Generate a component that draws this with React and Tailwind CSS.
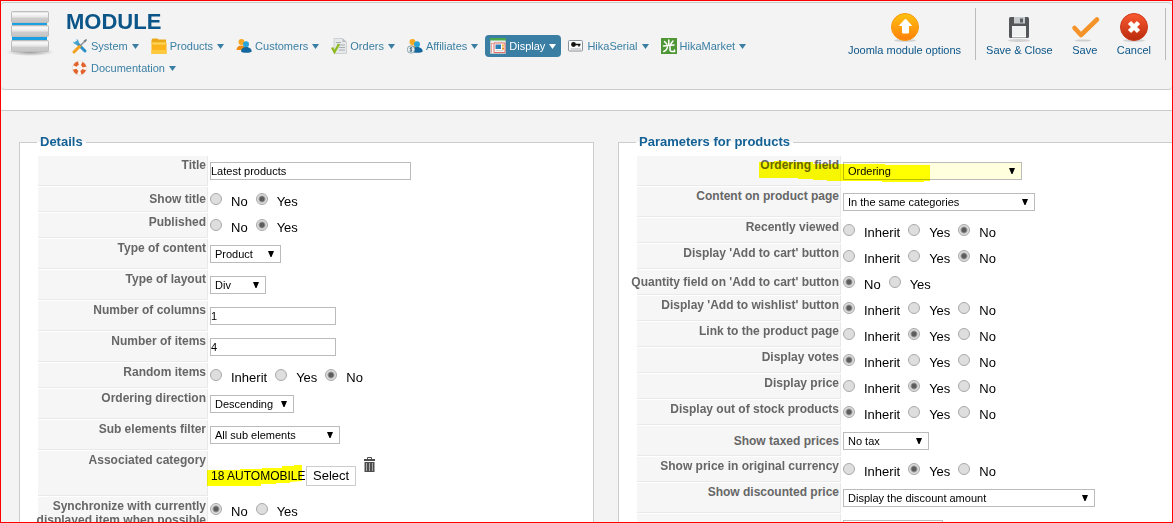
import React from 'react';
import clsx from 'clsx';

const PeopleShapes = () => (
  <>
    <circle cx="5.5" cy="4" r="3" fill="#f7a823" />
    <path d="M0.5 12c0-3 2-4.500 5-4.500s4 1.500 4 4.500z" fill="#f08c12" />
    <circle cx="10" cy="6.300" r="3" fill="#2aa3d8" />
    <path d="M5 13.500c0-3 2-4.500 5-4.500s5.700 1.500 5.700 4.500c-1 1.800-9.700 1.800-10.700 0z" fill="#14679c" />
  </>
);

const NavIcon = ({ name }) => (
  <svg viewBox="0 0 16 16" className="w-4 h-4 shrink-0" aria-hidden="true">
    {name === 'system' && (
      <>
        <path d="M4.500 4.500L13 13" stroke="#2b8fc7" strokeWidth="3" strokeLinecap="round" />
        <path d="M1 3.500a3.600 3.600 0 0 0 5.500 2.500a3.600 3.600 0 0 0-2-5l.5 2.500-2 1z" fill="#4ba3d0" />
        <path d="M2 14L8 8" stroke="#f2a01e" strokeWidth="3" strokeLinecap="round" />
        <path d="M8 8l5-5" stroke="#8a9299" strokeWidth="1.500" />
        <path d="M11.500 3l2.500-2 1 1-2 2.500z" fill="#6f777d" />
      </>
    )}
    {name === 'products' && (
      <>
        <path d="M0.500 2l1-1.500h5l1 1h7.500v4H.500z" fill="#eba91a" />
        <path d="M0.500 4.500h15V16H.500z" fill="#fbb41c" />
        <path d="M0.500 4.500h15l-1.500 2H2z" fill="#ffd75a" />
        <path d="M0.500 12h15v4H.500z" fill="#fdc93e" />
      </>
    )}
    {name === 'customers' && <PeopleShapes />}
    {name === 'orders' && (
      <>
        <path d="M3 .500h8.500l4 3.500v11.500H3z" fill="#e6e8e9" stroke="#c6c9cb" strokeWidth=".800" />
        <path d="M11.500 .500v3.500h4z" fill="#b6babd" />
        <path d="M5 4.500h5M6 7h8M8 9.500h6M8 12h6" stroke="#a9aeb1" />
        <path d="M1 9.500l2.500 4.500L8 6" stroke="#8dbb1f" strokeWidth="2.300" fill="none" />
      </>
    )}
    {name === 'affiliates' && (
      <>
        <PeopleShapes />
        <circle cx="4" cy="11.500" r="3.700" fill="#eef3f6" stroke="#73919f" strokeWidth=".800" />
        <path d="M5.300 10c-2-1-3 .8-1.300 1.400s.8 2.500-1.400 1.500M4 9v5" stroke="#33566b" strokeWidth=".800" fill="none" />
      </>
    )}
    {name === 'display' && (
      <>
        <path d="M0.500 .500h15v15h-15z" fill="#f5f5f5" stroke="#b9c6cc" />
        <path d="M0 0h16v2.500H0z" fill="#4aa84d" />
        <path d="M1.500 4h13" stroke="#d8dcdd" />
        <path d="M4 5h11v9.500H4z" fill="#fff" stroke="#e26a63" />
        <path d="M1 5.500h2.500M1.500 5v10" stroke="#e9a29c" />
        <path d="M5.500 6.500h5.500v4.500H5.500z" fill="#2b7fb5" />
        <path d="M12 6.500h2v2h-2z" fill="#f3b23c" />
        <path d="M12 9.500h2v2h-2z" fill="#f08c12" />
        <path d="M5.500 12.700h8" stroke="#c8cdd0" />
      </>
    )}
    {name === 'serial' && (
      <>
        <rect x=".500" y="2.500" width="14" height="10.500" rx="1" fill="#fbfbfb" stroke="#8a9299" />
        <circle cx="5.500" cy="6.500" r="2.400" fill="#111" />
        <path d="M7 6.500h5.500M11 6.500v2" stroke="#111" strokeWidth="1.600" />
        <path d="M2.500 11h10.500" stroke="#a9aeb1" />
      </>
    )}
    {name === 'market' && (
      <>
        <path d="M0 0h16v16H0z" fill="#4f9637" />
        <path
          d="M7.800 2v5.500M3.500 3.500l2.500 2.700M12 3l-2.300 3M2.500 8l10.500-1M6.500 8q0 4-3.800 5.500M9 8v3.500q0 2 2 2h2.500v-1.500"
          stroke="#fff"
          strokeWidth="1.500"
          strokeLinecap="round"
          fill="none"
        />
      </>
    )}
    {name === 'documentation' && (
      <>
        <circle cx="7.500" cy="8" r="5" stroke="#fdf6f2" strokeWidth="4.600" fill="none" />
        <circle cx="7.500" cy="8" r="5" stroke="#e2622a" strokeWidth="4" fill="none" strokeDasharray="4.400 3.454" strokeDashoffset="-1.727" />
        <circle cx="7.500" cy="8" r="7.200" stroke="#dcd6d2" strokeWidth=".600" fill="none" />
      </>
    )}
  </svg>
);

const navItems = [
  { label: 'System', icon: 'system' },
  { label: 'Products', icon: 'products' },
  { label: 'Customers', icon: 'customers' },
  { label: 'Orders', icon: 'orders' },
  { label: 'Affiliates', icon: 'affiliates' },
  { label: 'Display', icon: 'display', active: true },
  { label: 'HikaSerial', icon: 'serial' },
  { label: 'HikaMarket', icon: 'market' },
  { label: 'Documentation', icon: 'documentation' },
];

const Logo = () => (
  <svg viewBox="0 0 50 50" className="w-[50px] h-[50px] shrink-0" aria-hidden="true">
    <defs>
      <linearGradient id="slab" x1="0" y1="0" x2="0" y2="1">
        <stop offset="0" stopColor="#d6d6d6" />
        <stop offset=".2" stopColor="#fafafa" />
        <stop offset=".5" stopColor="#e6e6e6" />
        <stop offset=".6" stopColor="#cdcdcd" />
        <stop offset="1" stopColor="#c4c4c4" />
      </linearGradient>
      <radialGradient id="slabShadow">
        <stop offset="0" stopColor="#999" />
        <stop offset="1" stopColor="#999" stopOpacity="0" />
      </radialGradient>
    </defs>
    <ellipse cx="25" cy="44" rx="24" ry="4" fill="url(#slabShadow)" />
    <rect x="7" y="12" width="35" height="28" fill="#1a9fe0" />
    <rect x="6.500" y="3.500" width="37" height="11" rx="1" fill="url(#slab)" stroke="#bdbdbd" />
    <rect x="6.500" y="17.500" width="37" height="11" rx="1" fill="url(#slab)" stroke="#bdbdbd" />
    <rect x="6.500" y="32.500" width="37" height="11" rx="1" fill="url(#slab)" stroke="#bdbdbd" />
  </svg>
);

const ToolbarIcon = ({ name }) => (
  <svg viewBox="0 0 32 32" className="w-8 h-8" aria-hidden="true">
    <defs>
      <linearGradient id="orange" x1="0" y1="0" x2="0" y2="1">
        <stop offset="0" stopColor="#ffc20e" />
        <stop offset="1" stopColor="#ff7f0a" />
      </linearGradient>
      <linearGradient id="red" x1="0" y1="0" x2="0" y2="1">
        <stop offset="0" stopColor="#fb5a32" />
        <stop offset="1" stopColor="#b92a0c" />
      </linearGradient>
    </defs>
    {name === 'save' ? (
      <ellipse cx="14" cy="29.500" rx="8" ry="1" fill="#cfcfcf" />
    ) : (
      <ellipse cx="16" cy="29.500" rx="11" ry="1.500" fill="#d2d2d2" />
    )}
    {name === 'options' && (
      <>
        <circle cx="16" cy="16" r="13.500" fill="url(#orange)" stroke="#f79a10" />
        <path d="M16.500 8l6 6.500h-3V22h-6v-7.500h-3z" fill="#fff" stroke="#fff" strokeLinejoin="round" />
      </>
    )}
    {name === 'save-close' && (
      <>
        <path d="M6 7.500q0-1.500 1.500-1.500h17q1.500 0 1.500 1.500v18q0 1.500-1.500 1.500h-17q-1.500 0-1.500-1.500z" fill="#55585b" />
        <path d="M11 6h11v6.500H11z" fill="#c8cbcd" />
        <path d="M17 7.500h3v4h-3z" fill="#5b5e61" />
        <path d="M9 15h14v11H9z" fill="#f0f1f1" />
        <path d="M9 25h14v1.500H9z" fill="#fff" />
      </>
    )}
    {name === 'save' && (
      <path d="M5.500 17l6.500 7L28 8.500" fill="none" stroke="#f4932a" strokeWidth="4.600" strokeLinecap="round" strokeLinejoin="round" />
    )}
    {name === 'cancel' && (
      <>
        <circle cx="16" cy="16" r="13.500" fill="url(#red)" stroke="#c93a1a" />
        <path d="M11.500 11.500l9 9M20.500 11.500l-9 9" stroke="#fff" strokeWidth="4.500" />
      </>
    )}
  </svg>
);

const ToolbarButton = ({ icon, label }) => (
  <button type="button" className="flex flex-col items-center px-2 text-[11px] leading-[14px] text-[#0b5588] whitespace-nowrap">
    <ToolbarIcon name={icon} />
    {label}
  </button>
);

const TrashIcon = () => (
  <svg viewBox="0 0 11 15" className="w-[11px] h-[15px]" aria-hidden="true">
    <path d="M3.500 2V.500h4V2" stroke="#4d4d4d" fill="none" />
    <path d="M0 2h11v2H0zM.500 5h10v10H.500z" fill="#4d4d4d" />
    <path d="M2.500 6v8M5.500 6v8M8.500 6v8" stroke="#aaa" />
  </svg>
);

const SelectField = ({ id, value, width, soft, ariaLabel }) => (
  <div className={clsx('relative h-[18px] max-w-full', width)}>
    <select
      id={id}
      aria-label={ariaLabel}
      className={clsx(
        'block appearance-none w-full h-[18px] border border-[#bbb] pl-1 pr-4 text-[11px] leading-4 text-black',
        soft ? 'bg-[#ffffdd]' : 'bg-white'
      )}
    >
      <option>{value}</option>
    </select>
    <svg viewBox="0 0 6 6" className="absolute right-[7px] top-[6px] w-1.5 h-1.5 pointer-events-none" aria-hidden="true">
      <path d="M0 0h6L3.500 6h-1z" fill="#000" />
    </svg>
  </div>
);

const RadioField = ({ id, options, value }) => (
  <div role="radiogroup" aria-labelledby={`${id}-label`} className="flex gap-2">
    {options.map((option) => (
      <label key={option} className="flex items-start gap-[9px] text-[13px] leading-[18px] text-black">
        <input
          type="radio"
          name={id}
          defaultChecked={option === value}
          className="appearance-none w-3 h-3 rounded-full border border-[#a9a9a9] bg-[#dedede] checked:bg-[radial-gradient(circle,#5c5c5c_2px,#dedede_4px)]"
        />
        {option}
      </label>
    ))}
  </div>
);

const CategoryField = () => (
  <div className="relative flex items-end pb-1">
    <span className="w-24 pl-px text-[12px] leading-5 text-black whitespace-nowrap">18 AUTOMOBILE</span>
    <button type="button" className="mt-[9px] h-5 px-1.5 border border-[#ccc] bg-white text-[13px] leading-[18px] text-black">
      Select
    </button>
    <button type="button" aria-label="Delete" className="self-start ml-2">
      <TrashIcon />
    </button>
    <svg viewBox="0 0 95 21" className="absolute -left-[3px] top-2 w-[95px] h-[21px] mix-blend-multiply pointer-events-none" aria-hidden="true">
      <path d="M0 5h33V4h22V3h20V1h12V0h8v16l-12 1v1H69v1H54v2H0z" fill="#ffff00" />
    </svg>
  </div>
);

const Field = ({ row }) => {
  if (row.type === 'radio') return <RadioField {...row} />;
  if (row.type === 'select') return <SelectField {...row} />;
  if (row.type === 'category') return <CategoryField />;
  return (
    <input
      id={row.id}
      type="text"
      defaultValue={row.value}
      className={clsx('block h-[18px] max-w-full border border-[#bbb] bg-white text-[11px] leading-4 text-black', row.width)}
    />
  );
};

const FieldRow = ({ row, labelWidth }) => {
  const Label = row.type === 'radio' || row.type === 'category' || !row.label ? 'span' : 'label';

  return (
    <div className="relative flex">
      <div
        className={clsx(
          'shrink-0 flex justify-end bg-[#f6f6f6] border-r border-b border-[#e9e9e9] pr-px text-right text-[12px] leading-[14px] font-bold text-[#666] whitespace-pre',
          labelWidth,
          row.middle ? 'items-center' : 'items-start pt-0.5'
        )}
      >
        <Label id={`${row.id}-label`} htmlFor={Label === 'label' ? row.id : undefined}>
          {row.label}
        </Label>
      </div>
      <div className={clsx('flex-1 min-w-0 pl-0.5 pt-1.5', row.type === 'radio' ? 'pb-px' : 'pb-1.5')}>
        <Field row={row} />
      </div>
      {row.marked && (
        <svg viewBox="0 0 171 21" className="absolute left-[122px] top-[5px] w-[171px] h-[21px] mix-blend-multiply pointer-events-none" aria-hidden="true">
          <path d="M0 1h15V0h13v1h26v2h72v1h45v16h-6v1h-42v-1H68v-1H54v-1H39v-1H0z" fill="#ffff00" />
        </svg>
      )}
    </div>
  );
};

const Panel = ({ title, rows, labelWidth, className }) => (
  <fieldset className={clsx('min-w-0 border border-[#ccc] bg-white pl-[18px] pb-4', className)}>
    <legend className="-ml-px px-[3px] text-[13px] leading-4 font-bold text-[#146295]">{title}</legend>
    <div className="flex flex-col gap-px pt-1.5">
      {rows.map((row) => (
        <FieldRow key={row.id} row={row} labelWidth={labelWidth} />
      ))}
    </div>
  </fieldset>
);

const noYes = ['No', 'Yes'];
const inheritYesNo = ['Inherit', 'Yes', 'No'];

const detailRows = [
  { id: 'title', type: 'text', label: 'Title', value: 'Latest products', width: 'w-[201px]' },
  { id: 'show-title', type: 'radio', label: 'Show title', options: noYes, value: 'Yes', middle: true },
  { id: 'published', type: 'radio', label: 'Published', options: noYes, value: 'Yes' },
  { id: 'content-type', type: 'select', label: 'Type of content', value: 'Product', width: 'w-[71px]' },
  { id: 'layout-type', type: 'select', label: 'Type of layout', value: 'Div', width: 'w-14' },
  { id: 'columns', type: 'text', label: 'Number of columns', value: '1', width: 'w-[126px]' },
  { id: 'items', type: 'text', label: 'Number of items', value: '4', width: 'w-[126px]' },
  { id: 'random', type: 'radio', label: 'Random items', options: inheritYesNo, value: 'No' },
  { id: 'direction', type: 'select', label: 'Ordering direction', value: 'Descending', width: 'w-[84px]' },
  { id: 'filter', type: 'select', label: 'Sub elements filter', value: 'All sub elements', width: 'w-[130px]' },
  { id: 'category', type: 'category', label: 'Associated category' },
  { id: 'synchronize', type: 'radio', label: 'Synchronize with currently\ndisplayed item when possible', options: noYes, value: 'No' },
];

const productRows = [
  { id: 'ordering', type: 'select', label: 'Ordering field', value: 'Ordering', width: 'w-[179px]', soft: true, marked: true },
  { id: 'product-page', type: 'select', label: 'Content on product page', value: 'In the same categories', width: 'w-48' },
  { id: 'recent', type: 'radio', label: 'Recently viewed', options: inheritYesNo, value: 'No' },
  { id: 'cart', type: 'radio', label: "Display 'Add to cart' button", options: inheritYesNo, value: 'No' },
  { id: 'quantity', type: 'radio', label: "Quantity field on 'Add to cart' button", options: noYes, value: 'No', middle: true },
  { id: 'wishlist', type: 'radio', label: "Display 'Add to wishlist' button", options: inheritYesNo, value: 'Inherit' },
  { id: 'link', type: 'radio', label: 'Link to the product page', options: inheritYesNo, value: 'Yes' },
  { id: 'votes', type: 'radio', label: 'Display votes', options: inheritYesNo, value: 'Inherit' },
  { id: 'price', type: 'radio', label: 'Display price', options: inheritYesNo, value: 'Yes' },
  { id: 'stock', type: 'radio', label: 'Display out of stock products', options: inheritYesNo, value: 'Inherit' },
  { id: 'taxed', type: 'select', label: 'Show taxed prices', value: 'No tax', width: 'w-[86px]', middle: true },
  { id: 'currency', type: 'radio', label: 'Show price in original currency', options: inheritYesNo, value: 'Yes' },
  { id: 'discounted', type: 'select', label: 'Show discounted price', value: 'Display the discount amount', width: 'w-[252px]' },
  { id: 'extra', type: 'select', label: '', value: '', width: 'w-[100px]', ariaLabel: 'Price display' },
];

const App = () => (
  <div className="h-screen overflow-hidden border border-[#ff0000] bg-[#f3f3f3] font-['Liberation_Sans',Arial,sans-serif]">
    <header className="mt-px flex items-start border-y border-[#ccc] rounded-[4px] pt-[5px] pb-2.5 pl-1">
      <Logo />
      <div className="flex-1 min-w-0 pl-[11px]">
        <h1 className="text-[22px] leading-[27px] font-bold text-[#0b5588]">MODULE</h1>
        <nav className="flex flex-wrap gap-x-0.5 pl-px">
          {navItems.map((item) => (
            <a
              key={item.label}
              href="#"
              className={clsx(
                'flex items-center h-[22px] px-[5px] text-[11px] leading-[14px] whitespace-nowrap rounded-[4px]',
                item.active ? 'bg-[#3a7fa3] text-white' : 'text-[#3a7fa3]'
              )}
            >
              <NavIcon name={item.icon} />
              <span className="ml-[3px] mr-1 pb-px">{item.label}</span>
              <svg viewBox="0 0 7 5" className="w-[7px] h-[5px]" aria-hidden="true">
                <path d="M0 0h7L3.500 5z" fill="currentColor" />
              </svg>
            </a>
          ))}
        </nav>
      </div>
      <div className="flex shrink-0 pr-1.5">
        <div className="flex h-[52px] pt-[3px] pr-1.5 border-r border-[#bbb]">
          <ToolbarButton icon="options" label="Joomla module options" />
        </div>
        <div className="flex h-[52px] pt-[3px] pl-0.5 pr-1.5 border-r border-[#bbb]">
          <ToolbarButton icon="save-close" label="Save &amp; Close" />
          <ToolbarButton icon="save" label="Save" />
          <ToolbarButton icon="cancel" label="Cancel" />
        </div>
      </div>
    </header>
    <div className="h-5 bg-white" />
    <main className="grid grid-cols-[575fr_554fr] gap-6 border-t border-[#ccc] pt-[23px] pl-[18px]">
      <Panel title="Details" rows={detailRows} labelWidth="w-[170px]" />
      <Panel title="Parameters for products" rows={productRows} labelWidth="w-[204px]" className="border-r-0" />
    </main>
  </div>
);

export default App;
